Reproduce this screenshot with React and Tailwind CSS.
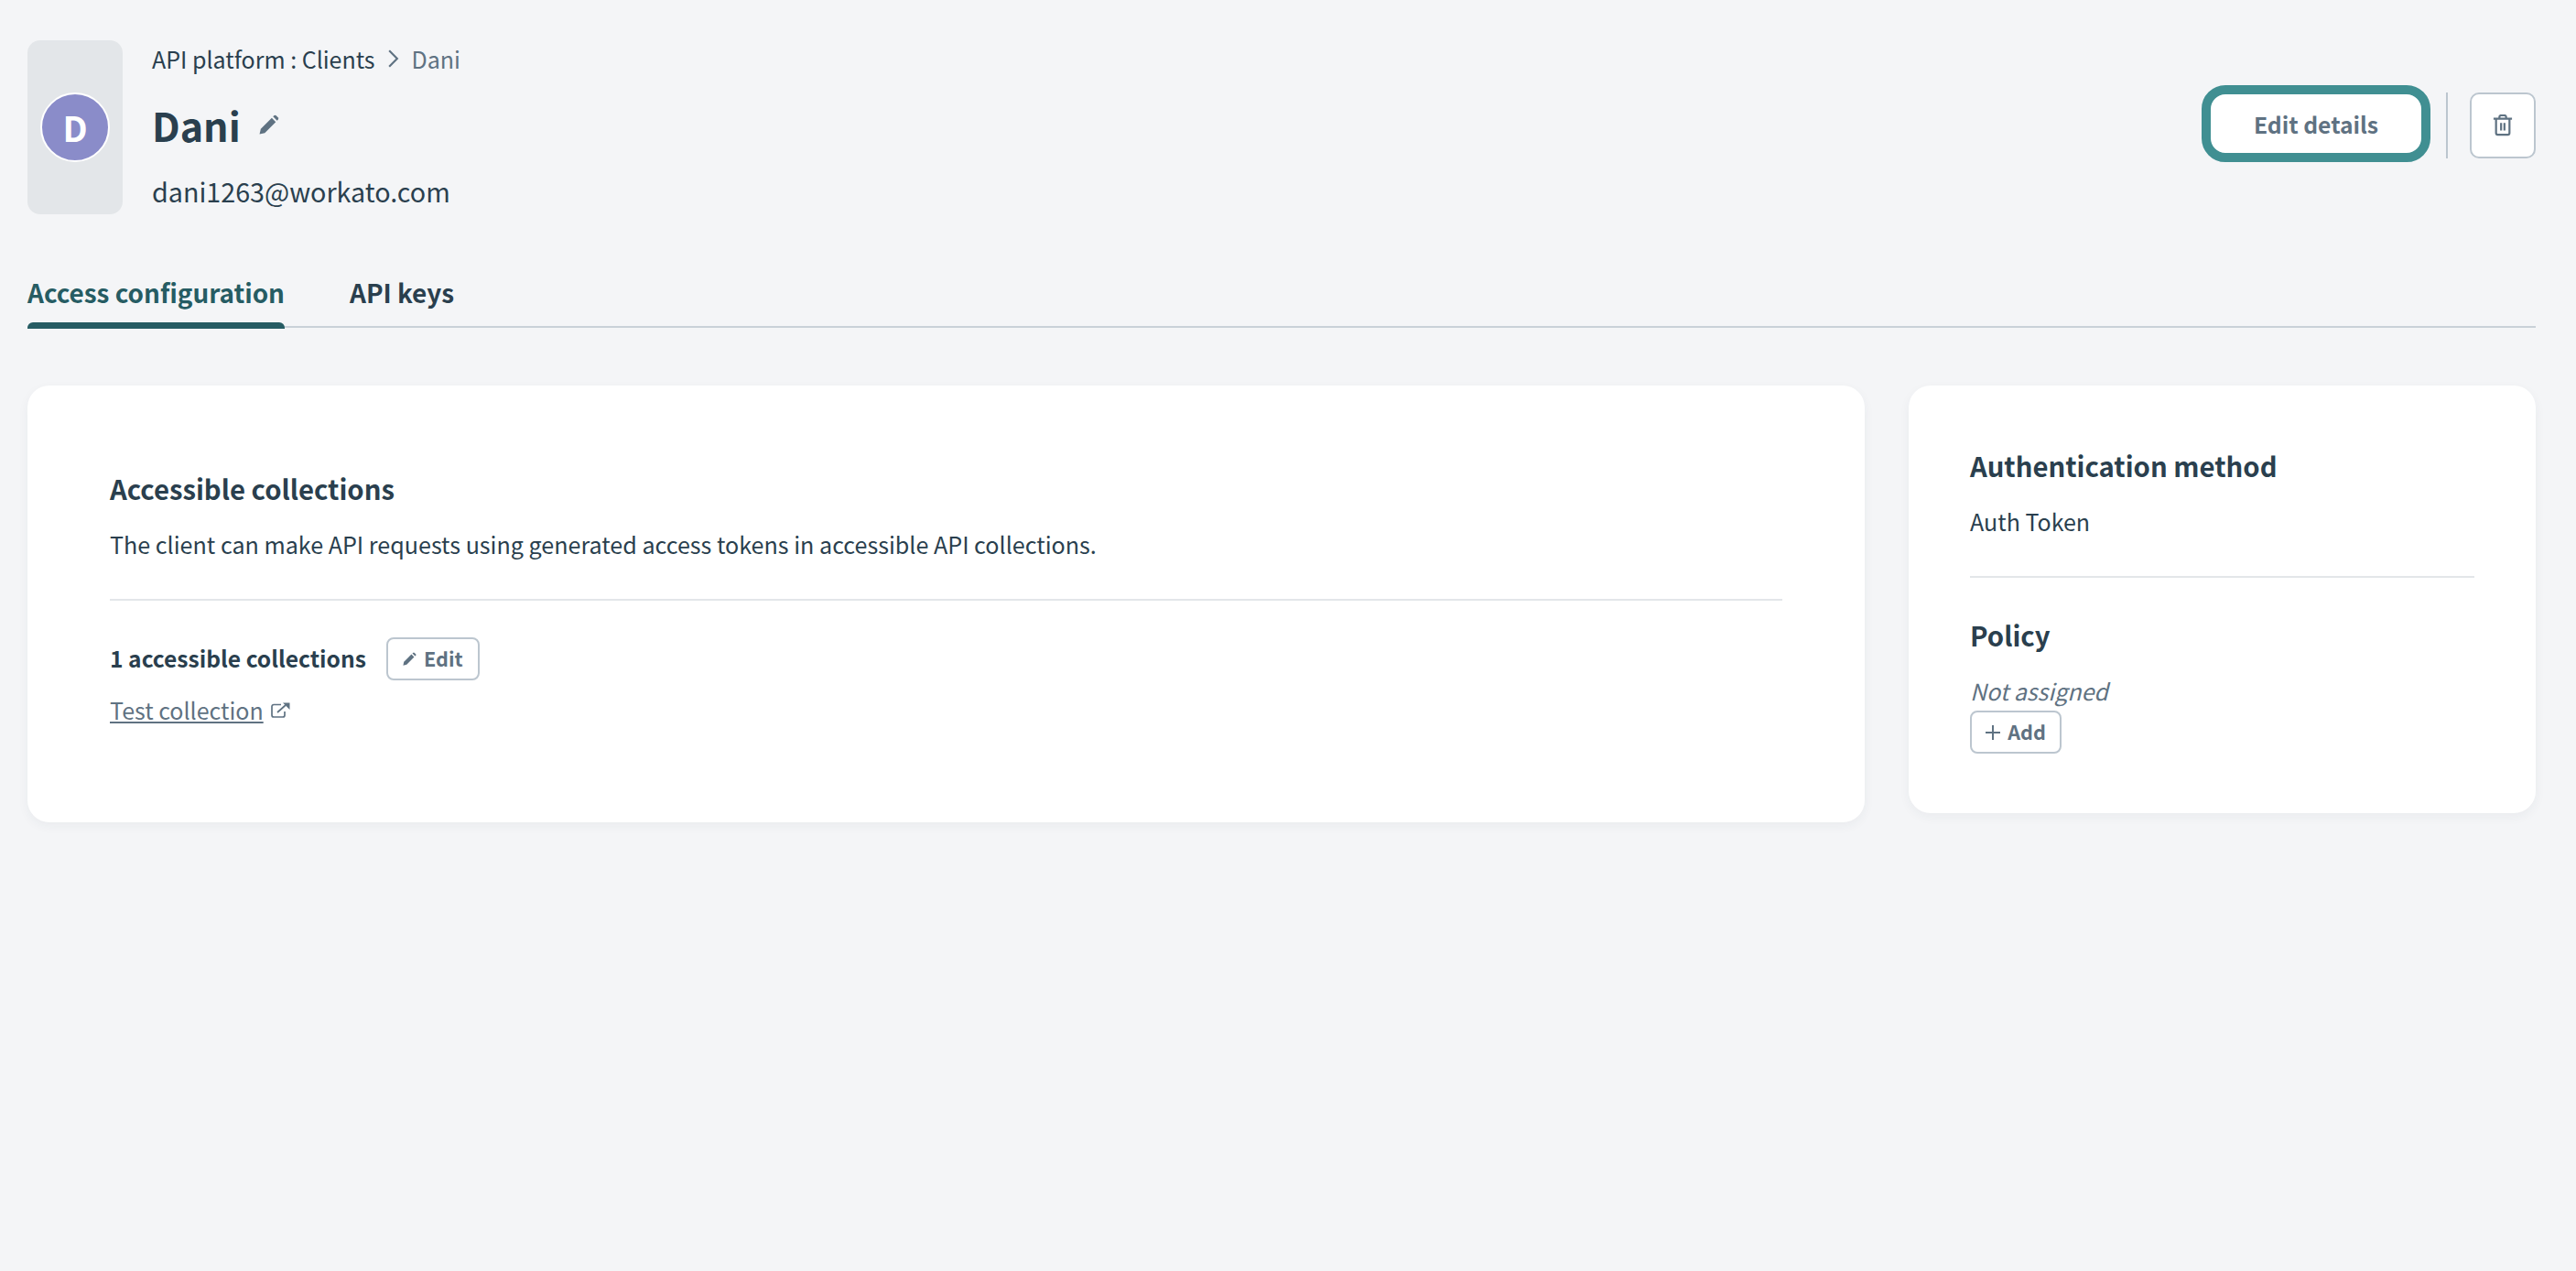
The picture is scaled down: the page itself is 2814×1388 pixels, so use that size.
const font = { fontFamily: '"Noto Sans CJK JP","Noto Sans",sans-serif' };

function Pencil({ className }) {
  return (
    <svg viewBox="0 0 20 20" className={className} fill="currentColor">
      <path d="M0.5 19.5l1.2-5.2L12.6 3.4l4 4L5.7 18.3z" />
      <path d="M13.9 2.1l.9-.9a1.6 1.6 0 0 1 2.2 0l1.8 1.8a1.6 1.6 0 0 1 0 2.2l-.9.9z" />
    </svg>
  );
}

export default function App() {
  return (
    <div style={font} className="min-h-screen bg-[#f4f5f7] text-[#2a3f4e] pl-[30px] pr-[44px] pt-[44px]">
      <header className="flex items-center h-[190px]">
        <div className="w-[104px] h-[190px] rounded-[14px] bg-[#e3e6e9] flex items-center justify-center">
          <div className="w-[76px] h-[76px] rounded-full bg-[#8a8cc9] border-2 border-white flex items-center justify-center text-white font-bold text-[38px] leading-none">D</div>
        </div>
        <div className="ml-[32px] flex flex-col h-[190px]">
          <div className="flex items-center h-[40px] text-[25px] leading-[40px]">
            <span>API platform : Clients</span>
            <svg viewBox="0 0 12 20" className="w-[13px] h-[22px] ml-[13px] mr-[14px] text-[#5f7282]" fill="none" stroke="currentColor" strokeWidth="2"><path d="M2 2l8 8-8 8" /></svg>
            <span className="text-[#5f7282]">Dani</span>
          </div>
          <div className="flex items-center mt-[28px] h-[48px]">
            <span className="text-[43px] font-bold leading-[48px]">Dani</span>
            <Pencil className="w-[22px] h-[22px] ml-[20px] text-[#5f7282]" />
          </div>
          <div className="mt-[27px] text-[28.7px] leading-[44px]">dani1263@workato.com</div>
        </div>
        <div className="ml-auto flex items-center mb-[8px]">
          <button className="w-[250px] h-[84px] pt-[1px] rounded-[26px] bg-white border-[10px] border-[#408f92] text-[#5f7282] font-bold text-[24.7px]">Edit details</button>
          <div className="w-[2px] h-[72px] bg-[#bcc6cf] ml-[17px] mr-[24px] mt-[4px]" />
          <button className="w-[72px] h-[72px] mt-[4px] rounded-[10px] bg-white border-2 border-[#bcc6cf] flex items-center justify-center text-[#5f7282]">
            <svg viewBox="0 0 24 26" className="w-[22px] h-[24px]" fill="none" stroke="currentColor" strokeWidth="2.4"><path d="M1 5h22M8 5V3a2 2 0 0 1 2-2h4a2 2 0 0 1 2 2v2M4 5v17a2 2 0 0 0 2 2h12a2 2 0 0 0 2-2V5M10 10v9M14 10v9" /></svg>
          </button>
        </div>
      </header>

      <nav className="mt-[59px] flex border-b-2 border-[#c9d1d8] h-[65px] text-[27.9px] font-bold">
        <div className="text-[#265c63] relative h-[65px] leading-[52px]">
          Access configuration
          <div className="absolute left-0 right-0 bottom-[-1px] h-[7px] bg-[#265c63] rounded-t-[6px]" />
        </div>
        <div className="ml-[71px] leading-[52px]">API keys</div>
      </nav>

      <main className="mt-[63px] flex items-start gap-[48px]">
        <section className="w-[2007px] h-[477px] bg-white rounded-[24px] shadow-[0_4px_12px_rgba(40,60,80,0.05)] px-[90px] pt-[90px]">
          <h2 className="text-[29.3px] font-bold leading-[44px]">Accessible collections</h2>
          <p className="mt-[17px] text-[25.1px] leading-[44px]">The client can make API requests using generated access tokens in accessible API collections.</p>
          <div className="mt-[38px] h-[2px] bg-[#e3e6e9]" />
          <div className="mt-[40px] flex items-center">
            <span className="text-[24.6px] font-bold mb-[2px]">1 accessible collections</span>
            <button className="ml-[22px] w-[102px] h-[47px] rounded-[8px] border-2 border-[#bcc6cf] flex items-center justify-center gap-[8px] text-[#5f7282] font-bold text-[21.6px]">
              <Pencil className="w-[15px] h-[15px]" /> Edit
            </button>
          </div>
          <div className="mt-[10px] flex items-center text-[25px] text-[#5f7282] leading-[44px]">
            <span className="underline">Test collection</span>
            <svg viewBox="0 0 21 17" className="w-[21px] h-[17px] ml-[8px]" fill="none" stroke="currentColor" strokeWidth="1.7"><path d="M11 2.5H3a2 2 0 0 0-2 2V14a2 2 0 0 0 2 2h10a2 2 0 0 0 2-2v-4M7 11l9-8" /><path d="M13 0.5h7.5V8z" fill="currentColor" stroke="none" /></svg>
          </div>
        </section>
        <aside className="w-[685px] h-[467px] bg-white rounded-[24px] shadow-[0_4px_12px_rgba(40,60,80,0.05)] px-[67px] pt-[65px]">
          <h2 className="text-[29.3px] font-bold leading-[44px]">Authentication method</h2>
          <p className="mt-[17px] text-[25px] leading-[44px]">Auth Token</p>
          <div className="mt-[38px] h-[2px] bg-[#e3e6e9]" />
          <h2 className="mt-[40px] text-[29.3px] font-bold leading-[44px]">Policy</h2>
          <p className="mt-[17px] text-[25px] leading-[44px] italic text-[#5f7282]">Not assigned</p>
          <button className="w-[100px] h-[47px] rounded-[8px] border-2 border-[#bcc6cf] flex items-center justify-center gap-[8px] text-[#5f7282] font-bold text-[21.6px]">
            <svg viewBox="0 0 16 16" className="w-[16px] h-[16px]" fill="none" stroke="currentColor" strokeWidth="2"><path d="M8 0v16M0 8h16" /></svg>
            Add
          </button>
        </aside>
      </main>
    </div>
  );
}
